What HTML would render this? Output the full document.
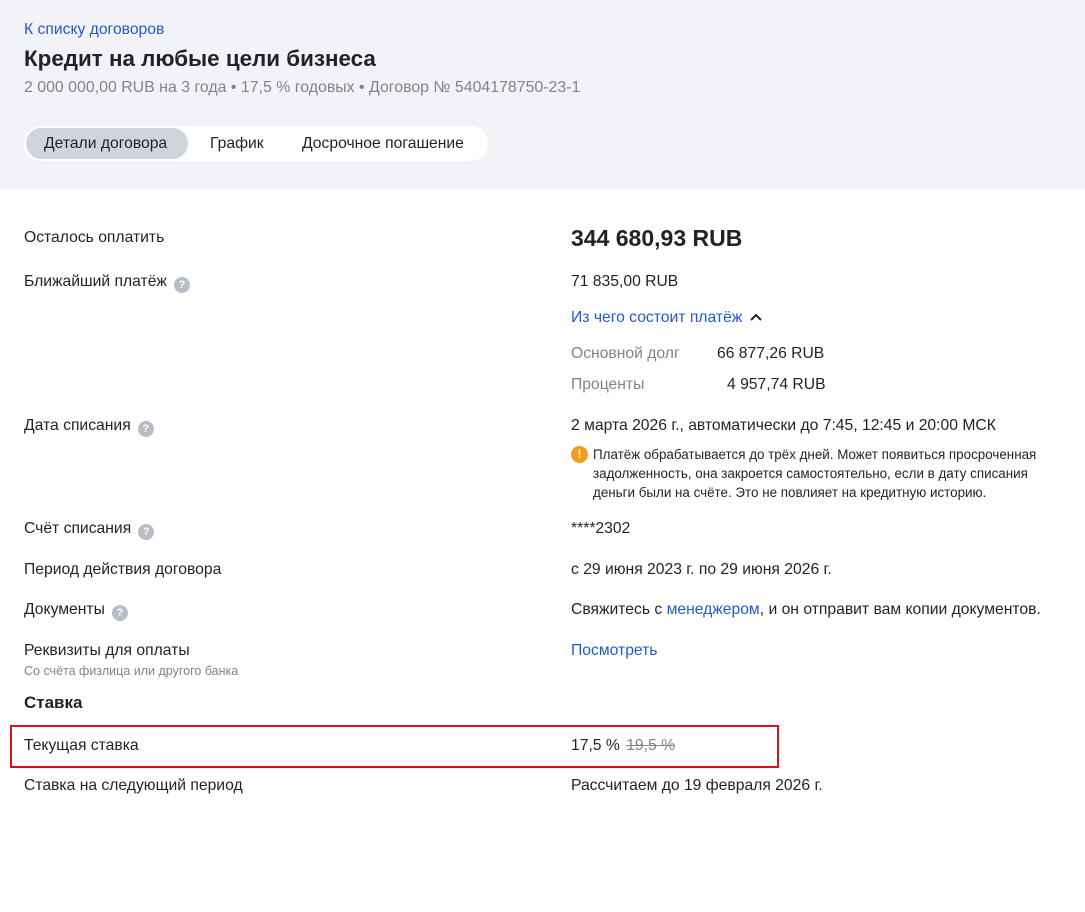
<!DOCTYPE html>
<html><head><meta charset="utf-8"><style>
body{margin:0;width:1085px;height:912px;background:#fff;font-family:"Liberation Sans",sans-serif;color:#1f2229;position:relative;overflow:hidden}
.hdr{position:absolute;left:0;top:0;width:1085px;height:189px;background:#f2f3f7}
.a{position:absolute;white-space:nowrap;line-height:20px;font-size:15.7px;margin-top:1px}
.q{display:inline-block;width:16px;height:16px;border-radius:50%;background:#b8bcc4;color:#fff;font-size:11px;font-weight:bold;text-align:center;line-height:16px;vertical-align:-2px;margin-left:7px}
.blue{color:#2458d1}
.gray{color:#80838a}
</style></head><body>
<div class="hdr"></div>
<div class="a blue" style="left:24px;top:19px">К списку договоров</div>
<div class="a" style="left:24px;top:44px;font-size:22.4px;line-height:28px;font-weight:bold">Кредит на любые цели бизнеса</div>
<div class="a gray" style="left:24px;top:77px;font-size:15.9px">2 000 000,00 RUB на 3 года • 17,5 % годовых • Договор № 5404178750-23-1</div>
<div style="position:absolute;left:24px;top:126px;width:464px;height:35px;background:#fff;border-radius:18px"></div>
<div style="position:absolute;left:26px;top:128px;width:162px;height:31px;background:#d0d5dc;border-radius:16px"></div>
<div class="a" style="left:44px;top:133px">Детали договора</div>
<div class="a" style="left:210px;top:133px">График</div>
<div class="a" style="left:302px;top:133px">Досрочное погашение</div>

<div class="a" style="left:24px;top:227px">Осталось оплатить</div>
<div class="a" style="left:571px;top:223px;font-size:23px;line-height:28px;font-weight:bold">344 680,93 RUB</div>
<div class="a" style="left:24px;top:271px">Ближайший платёж<span class="q">?</span></div>
<div class="a" style="left:571px;top:271px">71 835,00 RUB</div>
<div class="a blue" style="left:571px;top:307px">Из чего состоит платёж <svg width="14" height="10" viewBox="0 0 14 10" style="margin-left:2px"><path d="M2 8 L7 3 L12 8" fill="none" stroke="#1f2229" stroke-width="2"/></svg></div>
<div class="a gray" style="left:571px;top:343px">Основной долг</div>
<div class="a" style="left:717px;top:343px">66 877,26 RUB</div>
<div class="a gray" style="left:571px;top:374px">Проценты</div>
<div class="a" style="left:727px;top:374px">4 957,74 RUB</div>
<div class="a" style="left:24px;top:415px">Дата списания<span class="q">?</span></div>
<div class="a" style="left:571px;top:415px">2 марта 2026 г., автоматически до 7:45, 12:45 и 20:00 МСК</div>
<div style="position:absolute;left:571px;top:446px;width:17px;height:17px;border-radius:50%;background:#f29b1d;color:#fff;font-weight:bold;font-size:12px;text-align:center;line-height:17px">!</div>
<div class="a" style="left:593px;top:444px;font-size:13.4px;line-height:19px;white-space:normal;width:462px">Платёж обрабатывается до трёх дней. Может появиться просроченная задолженность, она закроется самостоятельно, если в дату списания деньги были на счёте. Это не повлияет на кредитную историю.</div>
<div class="a" style="left:24px;top:518px">Счёт списания<span class="q">?</span></div>
<div class="a" style="left:571px;top:518px">****2302</div>
<div class="a" style="left:24px;top:559px">Период действия договора</div>
<div class="a" style="left:571px;top:559px">с 29 июня 2023 г. по 29 июня 2026 г.</div>
<div class="a" style="left:24px;top:599px">Документы<span class="q">?</span></div>
<div class="a" style="left:571px;top:599px">Свяжитесь с <span class="blue">менеджером</span>, и он отправит вам копии документов.</div>
<div class="a" style="left:24px;top:640px">Реквизиты для оплаты</div>
<div class="a gray" style="left:24px;top:662px;font-size:12.5px;line-height:16px">Со счёта физлица или другого банка</div>
<div class="a blue" style="left:571px;top:640px">Посмотреть</div>
<div class="a" style="left:24px;top:691px;font-size:17px;line-height:22px;font-weight:bold">Ставка</div>
<div style="position:absolute;left:10px;top:725px;width:765px;height:39px;border:2px solid #d9101a"></div>
<div class="a" style="left:24px;top:735px">Текущая ставка</div>
<div class="a" style="left:571px;top:735px">17,5 % <span class="gray" style="text-decoration:line-through;margin-left:2px">19,5 %</span></div>
<div class="a" style="left:24px;top:775px">Ставка на следующий период</div>
<div class="a" style="left:571px;top:775px">Рассчитаем до 19 февраля 2026 г.</div>
</body></html>
